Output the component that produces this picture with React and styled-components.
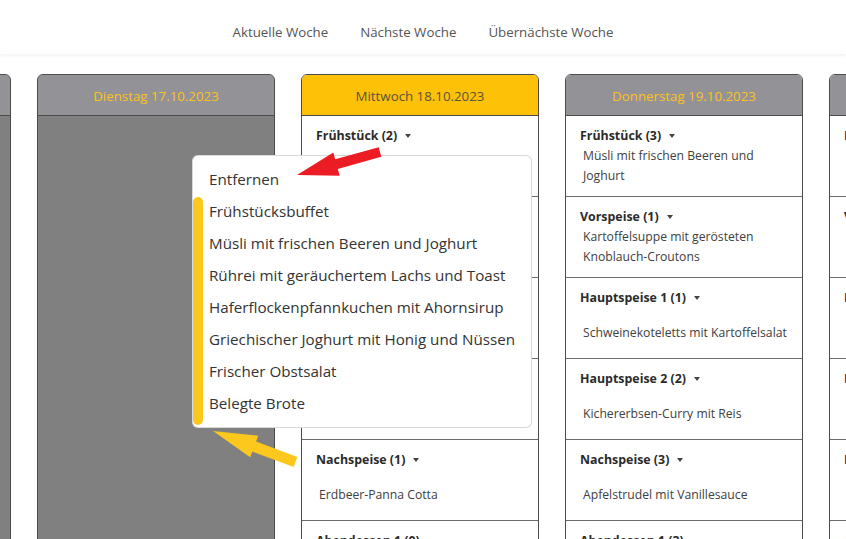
import React from 'react';
import styled, { createGlobalStyle, css } from 'styled-components';

const GlobalStyle = createGlobalStyle`
  html, body {
    margin: 0;
    padding: 0;
    background: #ffffff;
    font-family: "Open Sans", "Noto Sans", "Liberation Sans", sans-serif;
    overflow: hidden;
  }
`;

const Page = styled.div`
  position: relative;
  height: 100vh;
  overflow: hidden;
`;

const NavBar = styled.nav`
  height: 54px;
  box-sizing: border-box;
  padding-top: 22px;
  display: flex;
  justify-content: center;
  align-items: flex-start;
  background: #ffffff;
  box-shadow: 0 1px 4px rgba(0, 0, 0, 0.07);
  position: relative;
  z-index: 1;
`;

const NavLink = styled.a`
  padding: 0 16px;
  font-size: 13.3px;
  color: #555555;
  text-decoration: none;
  line-height: 20px;
`;

const Board = styled.div`
  display: flex;
  gap: 26px;
  margin-left: -227px;
  padding-top: 20px;
  height: calc(100vh - 54px);
  box-sizing: border-box;
`;

const Column = styled.section`
  flex: 0 0 238px;
  box-sizing: border-box;
  min-height: 520px;
  border: 1px solid #4b4b4b;
  border-radius: 6px 6px 0 0;
  background: ${p => (p.$past ? '#808080' : '#ffffff')};
  overflow: hidden;
`;

const ColumnHeader = styled.header`
  height: 41px;
  box-sizing: border-box;
  padding-top: 2px;
  display: flex;
  align-items: center;
  justify-content: center;
  border-bottom: 1px solid #4b4b4b;
  background: #939297;
  color: #fcc21b;
  font-size: 13.3px;
  ${p => p.$active && css`
    background: #fdc107;
    color: #5a5440;
  `}
`;

const MealRow = styled.div`
  box-sizing: border-box;
  height: 81px;
  border-bottom: 1px solid #6b6b6b;
  padding: 10px 14px 0;
`;

const MealTitle = styled.div`
  font-size: 12.4px;
  font-weight: 700;
  color: #2b2b2b;
  line-height: 20px;
  white-space: nowrap;

  &::after {
    content: "";
    display: inline-block;
    margin-left: 8px;
    vertical-align: 2px;
    border-top: 4px solid #444444;
    border-left: 3.5px solid transparent;
    border-right: 3.5px solid transparent;
  }
`;

const MealText = styled.div`
  font-size: 12.2px;
  color: #404040;
  line-height: 20px;
  padding-left: 3px;
  ${p => p.$single && css`
    margin-top: 15px;
  `}
`;

const Menu = styled.div`
  position: absolute;
  left: 192px;
  top: 155px;
  width: 340px;
  box-sizing: border-box;
  padding: 7px 0 8px;
  background: #ffffff;
  border: 1px solid rgba(0, 0, 0, 0.15);
  border-radius: 6px;
  z-index: 2;
`;

const MenuItem = styled.div`
  padding: 4px 16px;
  font-size: 15.2px;
  line-height: 24px;
  color: #333333;
  white-space: nowrap;
`;

const Marks = styled.svg`
  position: absolute;
  left: 0;
  top: 0;
  width: 846px;
  height: 539px;
  pointer-events: none;
  z-index: 3;
`;

const days = [
  { name: 'Montag 16.10.2023', past: true },
  { name: 'Dienstag 17.10.2023', past: true },
  {
    name: 'Mittwoch 18.10.2023',
    active: true,
    meals: [
      { title: 'Frühstück (2)', text: '' },
      { title: 'Vorspeise (1)', text: 'Tomatensuppe mit Basilikum', single: true },
      { title: 'Hauptspeise 1 (1)', text: 'Rinderroulade mit Rotkohl', single: true },
      { title: 'Hauptspeise 2 (1)', text: 'Gemüselasagne', single: true },
      { title: 'Nachspeise (1)', text: 'Erdbeer-Panna Cotta', single: true },
      { title: 'Abendessen 1 (0)', text: '', single: true },
    ],
  },
  {
    name: 'Donnerstag 19.10.2023',
    meals: [
      { title: 'Frühstück (3)', text: 'Müsli mit frischen Beeren und Joghurt' },
      { title: 'Vorspeise (1)', text: 'Kartoffelsuppe mit gerösteten Knoblauch-Croutons' },
      { title: 'Hauptspeise 1 (1)', text: 'Schweinekoteletts mit Kartoffelsalat', single: true },
      { title: 'Hauptspeise 2 (2)', text: 'Kichererbsen-Curry mit Reis', single: true },
      { title: 'Nachspeise (3)', text: 'Apfelstrudel mit Vanillesauce', single: true },
      { title: 'Abendessen 1 (3)', text: '', single: true },
    ],
  },
  {
    name: 'Freitag 20.10.2023',
    meals: [
      { title: 'Frühstück (1)', text: 'Frischer Obstsalat', single: true },
      { title: 'Vorspeise (1)', text: 'Gemischter Salat', single: true },
      { title: 'Hauptspeise 1 (1)', text: 'Fischfilet mit Kartoffeln', single: true },
      { title: 'Hauptspeise 2 (1)', text: 'Spinatknödel', single: true },
      { title: 'Nachspeise (1)', text: 'Schokoladenmousse', single: true },
      { title: 'Abendessen 1 (0)', text: '', single: true },
    ],
  },
];

const menuItems = [
  'Entfernen',
  'Frühstücksbuffet',
  'Müsli mit frischen Beeren und Joghurt',
  'Rührei mit geräuchertem Lachs und Toast',
  'Haferflockenpfannkuchen mit Ahornsirup',
  'Griechischer Joghurt mit Honig und Nüssen',
  'Frischer Obstsalat',
  'Belegte Brote',
];

export default function App() {
  return (
    <Page>
      <GlobalStyle />
      <NavBar>
        <NavLink>Aktuelle Woche</NavLink>
        <NavLink>Nächste Woche</NavLink>
        <NavLink>Übernächste Woche</NavLink>
      </NavBar>
      <Board>
        {days.map(day => (
          <Column key={day.name} $past={day.past}>
            <ColumnHeader $active={day.active}>{day.name}</ColumnHeader>
            {(day.meals || []).map(meal => (
              <MealRow key={meal.title}>
                <MealTitle>{meal.title}</MealTitle>
                <MealText $single={meal.single}>{meal.text}</MealText>
              </MealRow>
            ))}
          </Column>
        ))}
      </Board>
      <Menu>
        {menuItems.map(item => (
          <MenuItem key={item}>{item}</MenuItem>
        ))}
      </Menu>
      <Marks viewBox="0 0 846 539">
        <rect x="193" y="197" width="10" height="228" rx="5" fill="#fcc81d" />
        <polygon
          points="297,175 339.7,175.7 337.8,168.9 381.3,156.8 378.7,147.2 335.2,159.3 333.3,152.5"
          fill="#ec1c24"
        />
        <polygon
          points="213,431 258.2,435.7 256.1,441.4 297.4,456.9 293.6,467.1 252.3,451.6 250.2,457.3"
          fill="#fcc81d"
        />
      </Marks>
    </Page>
  );
}
